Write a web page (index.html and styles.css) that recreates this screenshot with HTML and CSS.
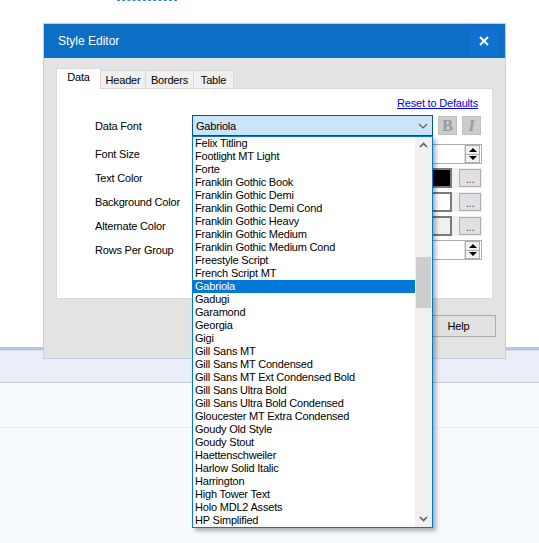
FILE: index.html
```html
<!DOCTYPE html>
<html lang="en">
<head>
  <meta charset="UTF-8">
  <title>Style Editor</title>
  <link rel="stylesheet" href="styles.css">
</head>
<body>
  <div class="desktop">
    <!-- fondo de la aplicación -->
    <div class="top-area"><div class="dash"></div></div>
    <div class="ribbon"></div>
    <div class="content"><div class="content-line"></div></div>

    <!-- ventana de diálogo -->
    <div class="dialog">
      <div class="titlebar">
        <span class="title">Style Editor</span>
        <span class="close">
          <svg width="10" height="10" viewBox="0 0 10 10"><path d="M1 1 L9 9 M9 1 L1 9" stroke="#fff" stroke-width="2"/></svg>
        </span>
      </div>
      <div class="dialog-body">
        <div class="tabs">
          <div class="tab active">Data</div>
          <div class="tab tab-header">Header</div>
          <div class="tab tab-borders">Borders</div>
          <div class="tab tab-table">Table</div>
        </div>
        <div class="panel">
          <div class="reset"><a href="#">Reset to Defaults</a></div>
          <div class="form">
            <div class="row row-first">
              <span class="label">Data Font</span>
              <div class="ctrl">
                <div class="combo">
                  <span>Gabriola</span>
                  <svg class="chev" width="10" height="6" viewBox="0 0 10 6"><path d="M1 1 L5 5 L9 1" fill="none" stroke="#606060" stroke-width="1.2"/></svg>
                </div>
                <span class="fmt fmt-b">B</span>
                <span class="fmt fmt-i">I</span>
              </div>
            </div>
            <div class="row">
              <span class="label">Font Size</span>
              <div class="ctrl">
                <div class="spin">
                  <div class="spin-btns">
                    <span class="spin-btn"><span class="tri-up"></span></span>
                    <span class="spin-btn"><span class="tri-down"></span></span>
                  </div>
                </div>
              </div>
            </div>
            <div class="row">
              <span class="label">Text Color</span>
              <div class="ctrl strip">
                <span class="swatch black"></span>
                <span class="dots">...</span>
              </div>
            </div>
            <div class="row">
              <span class="label">Background Color</span>
              <div class="ctrl strip">
                <span class="swatch white"></span>
                <span class="dots">...</span>
              </div>
            </div>
            <div class="row">
              <span class="label">Alternate Color</span>
              <div class="ctrl strip">
                <span class="swatch grey"></span>
                <span class="dots">...</span>
              </div>
            </div>
            <div class="row">
              <span class="label">Rows Per Group</span>
              <div class="ctrl">
                <div class="spin">
                  <div class="spin-btns">
                    <span class="spin-btn"><span class="tri-up"></span></span>
                    <span class="spin-btn"><span class="tri-down"></span></span>
                  </div>
                </div>
              </div>
            </div>
          </div>
        </div>
        <div class="buttons">
          <span class="btn">Help</span>
        </div>
      </div>
    </div>

    <!-- lista desplegable abierta -->
    <div class="dropdown">
      <ul class="items">
        <li>Felix Titling</li>
        <li>Footlight MT Light</li>
        <li>Forte</li>
        <li>Franklin Gothic Book</li>
        <li>Franklin Gothic Demi</li>
        <li>Franklin Gothic Demi Cond</li>
        <li>Franklin Gothic Heavy</li>
        <li>Franklin Gothic Medium</li>
        <li>Franklin Gothic Medium Cond</li>
        <li>Freestyle Script</li>
        <li>French Script MT</li>
        <li class="selected">Gabriola</li>
        <li>Gadugi</li>
        <li>Garamond</li>
        <li>Georgia</li>
        <li>Gigi</li>
        <li>Gill Sans MT</li>
        <li>Gill Sans MT Condensed</li>
        <li>Gill Sans MT Ext Condensed Bold</li>
        <li>Gill Sans Ultra Bold</li>
        <li>Gill Sans Ultra Bold Condensed</li>
        <li>Gloucester MT Extra Condensed</li>
        <li>Goudy Old Style</li>
        <li>Goudy Stout</li>
        <li>Haettenschweiler</li>
        <li>Harlow Solid Italic</li>
        <li>Harrington</li>
        <li>High Tower Text</li>
        <li>Holo MDL2 Assets</li>
        <li>HP Simplified</li>
      </ul>
      <div class="scrollbar">
        <svg class="arrow" width="17" height="17" viewBox="0 0 17 17"><path d="M5 10 L8.5 6.5 L12 10" fill="none" stroke="#606060" stroke-width="1.6"/></svg>
        <div class="track"><div class="thumb"></div></div>
        <svg class="arrow" width="17" height="17" viewBox="0 0 17 17"><path d="M5 7 L8.5 10.5 L12 7" fill="none" stroke="#606060" stroke-width="1.6"/></svg>
      </div>
    </div>
  </div>
</body>
</html>
```

FILE: styles.css
```css
body {
  margin: 0;
  font-family: "Liberation Sans", Arial, sans-serif;
  font-size: 11px;
  letter-spacing: -0.2px;
  color: #000;
  background: #fff;
}
.desktop {
  position: relative;
  width: 539px;
  height: 543px;
  overflow: hidden;
}
.top-area {
  height: 347px;
  background: #fff;
}
.dash {
  margin-left: 117px;
  width: 60px;
  border-top: 1px dashed #3a86d8;
}
.ribbon {
  height: 32px;
  border-top: 3px solid #b6c5e4;
  box-shadow: inset 0 1px 0 #d6dbe6;
  background: #e9eef9;
  border-bottom: 1px solid #c6c6c6;
}
.content {
  height: 160px;
  background: #f6f9fe;
}
.content-line {
  height: 44px;
  border-bottom: 1px solid #e9ecf1;
}

/* ventana */
.dialog {
  position: absolute;
  left: 43px;
  top: 23px;
  width: 461px;
  height: 334px;
  border: 1px solid #c3cfe6;
  background: #e3e3e3;
}
.titlebar {
  display: flex;
  align-items: center;
  height: 34px;
  padding-left: 14px;
  background: #0c6ec5;
  color: #fff;
}
.title {
  font-size: 12px;
  letter-spacing: 0;
}
.close {
  margin-left: auto;
  margin-right: 7px;
  width: 28px;
  height: 27px;
  background: #1072d0;
  display: flex;
  align-items: center;
  justify-content: center;
}
.dialog-body {
  padding: 10px 12px 0 12px;
}
.tabs {
  display: flex;
  align-items: flex-end;
  height: 20px;
}
.tab {
  box-sizing: border-box;
  height: 18px;
  border: 1px solid #d9d9d9;
  border-bottom: none;
  background: #f0f0f0;
  text-align: center;
  line-height: 18px;
  margin-left: -1px;
}
.tab.active {
  height: 21px;
  width: 45px;
  margin-left: 0;
  margin-bottom: -1px;
  background: #fff;
  line-height: 17px;
  position: relative;
  z-index: 1;
}
.tab-header { width: 46px; }
.tab-borders { width: 49px; }
.tab-table { width: 41px; }
.panel {
  box-sizing: border-box;
  height: 211px;
  border: 1px solid #d9d9d9;
  background: #fff;
  padding: 8px 14px 0 38px;
}
.reset {
  text-align: right;
  line-height: 13px;
}
.reset a {
  color: #0000ff;
}
.form {
  margin-top: 5px;
  margin-right: -5px;
}
.row {
  display: flex;
  align-items: center;
  height: 20px;
  margin-bottom: 4px;
}
.row-first {
  height: 21px;
  margin-bottom: 8px;
}
.label {
  width: 97px;
  flex: none;
}
.ctrl {
  display: flex;
  align-items: center;
  width: 290px;
  height: 100%;
}
.combo {
  box-sizing: border-box;
  width: 241px;
  height: 21px;
  border: 1px solid #005499;
  background: #cce4f7;
  display: flex;
  align-items: center;
  padding-left: 3px;
}
.chev {
  margin-left: auto;
  margin-right: 4px;
}
.fmt {
  box-sizing: border-box;
  width: 19px;
  height: 19px;
  margin-left: 5px;
  background: #cccccc;
  border: 1px solid #bfbfbf;
  color: #9a9a9a;
  font-family: "Liberation Serif", serif;
  font-size: 16px;
  font-weight: bold;
  text-align: center;
  line-height: 17px;
}
.fmt-i {
  font-style: italic;
}
.spin {
  box-sizing: border-box;
  width: 290px;
  height: 20px;
  border: 1px solid #adadad;
  display: flex;
  align-items: center;
  background: #fff;
}
.spin-btns {
  margin-left: auto;
  margin-right: 1px;
  display: flex;
  flex-direction: column;
  width: 15px;
  height: 18px;
  border-left: 1px solid #e0e0e0;
}
.spin-btn {
  flex: 1;
  display: flex;
  align-items: center;
  justify-content: center;
  background: #f0f0f0;
  border: 1px solid #adadad;
  box-sizing: border-box;
}
.spin-btn + .spin-btn {
  border-top: none;
}
.tri-up {
  width: 0;
  height: 0;
  border-left: 4px solid transparent;
  border-right: 4px solid transparent;
  border-bottom: 4px solid #000;
}
.tri-down {
  width: 0;
  height: 0;
  border-left: 4px solid transparent;
  border-right: 4px solid transparent;
  border-top: 4px solid #000;
}
.strip {
  background: #f0f0f0;
  gap: 7px;
}
.swatch {
  box-sizing: border-box;
  flex: 1;
  height: 20px;
  border: 2px solid #7a7a7a;
}
.swatch.black { background: #000; }
.swatch.white { background: #fff; }
.swatch.grey { background: #f0f0f0; }
.dots {
  box-sizing: border-box;
  width: 22px;
  height: 18px;
  margin-right: 1px;
  border: 1px solid #adadad;
  background: #e1e1e1;
  text-align: center;
  line-height: 18px;
  color: #5a2a8a;
}
.buttons {
  display: flex;
  justify-content: flex-end;
  margin-top: 16px;
  margin-right: -3px;
}
.btn {
  box-sizing: border-box;
  width: 75px;
  height: 22px;
  border: 1px solid #adadad;
  background: #e1e1e1;
  text-align: center;
  line-height: 20px;
}

/* lista desplegable */
.dropdown {
  position: absolute;
  left: 192px;
  top: 136px;
  width: 239px;
  height: 390px;
  border: 1px solid #0078d7;
  background: #fff;
  display: flex;
  box-shadow: 3px 3px 4px rgba(0, 0, 0, 0.3);
}
.items {
  list-style: none;
  margin: 0;
  padding: 0;
  flex: 1;
  overflow: hidden;
}
.items li {
  height: 13px;
  line-height: 13px;
  padding-left: 2px;
  white-space: nowrap;
}
.items li.selected {
  background: #0078d7;
  color: #fff;
}
.scrollbar {
  width: 17px;
  background: #f0f0f0;
  display: flex;
  flex-direction: column;
}
.arrow {
  display: block;
  flex: none;
}
.track {
  flex: 1;
  position: relative;
}
.thumb {
  margin-top: 103px;
  margin-left: 1px;
  height: 51px;
  width: 15px;
  background: #cdcdcd;
}
```
